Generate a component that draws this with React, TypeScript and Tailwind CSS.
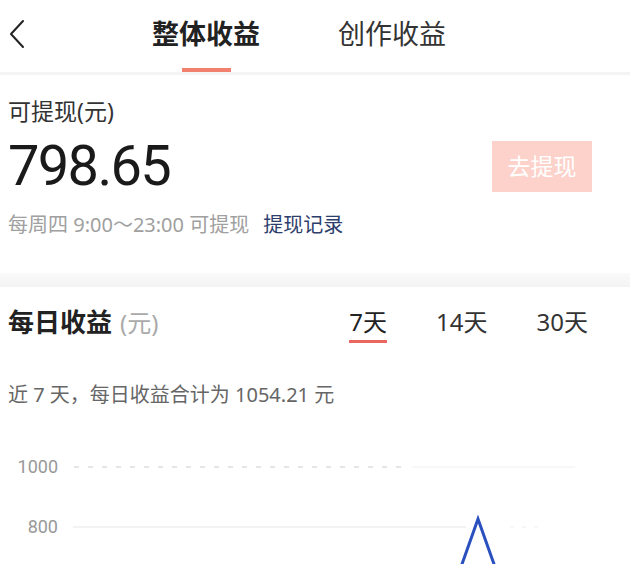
import React from "react";

const cjk = { fontFamily: '"Noto Sans", "Noto Sans CJK SC", sans-serif' };

export default function App() {
  return (
    <div className="w-[630px] h-[564px] overflow-hidden bg-white text-[#222]" style={cjk}>
      {/* Header */}
      <div className="relative h-[72px] flex items-center">
        <div className="w-[40px] pl-[8px] pb-[4px] flex items-center">
          <svg width="18" height="32" viewBox="0 0 18 32">
            <path d="M15 3 L3 16 L15 29" fill="none" stroke="#222" strokeWidth="2" strokeLinecap="round" strokeLinejoin="round" />
          </svg>
        </div>
        <div className="flex ml-[112px] gap-[78px] h-full">
          <div className="relative flex items-center h-full pb-[6px]">
            <span className="text-[27px] font-bold leading-none">整体收益</span>
            <div className="absolute bottom-0 left-[30px] w-[49px] h-[4px] bg-[#f2806e]" />
          </div>
          <div className="flex items-center h-full pb-[6px]">
            <span className="text-[27px] leading-none text-[#333]">创作收益</span>
          </div>
        </div>
      </div>
      <div className="h-[3px] bg-[#f4f4f4]" />

      {/* Balance */}
      <div className="px-[8px] pt-[21px] h-[198px]">
        <div className="text-[23px] leading-[30px] text-[#333]">可提现(元)</div>
        <div className="flex items-center justify-between mt-[8px]">
          <div className="text-[56px] leading-[64px] tracking-[-0.03em] text-[#1a1a1a]" style={{ fontFamily: "Roboto, sans-serif" }}>
            798.65
          </div>
          <div className="w-[100px] h-[51px] mr-[30px] bg-[#fcd2ca] flex items-center justify-center text-white text-[23px]">
            去提现
          </div>
        </div>
        <div className="flex items-center mt-[14px] leading-[26px] text-[20px]">
          <span className="text-[#a0a0a0]">每周四 9:00～23:00 可提现</span>
          <span className="ml-[14px] text-[#2d3e6d]">提现记录</span>
        </div>
      </div>
      <div className="h-[14px] bg-gradient-to-b from-[#fafafa] to-[#f3f3f3]" />

      {/* Daily */}
      <div className="flex items-start justify-between pl-[8px] pr-[42px] pt-[20px]">
        <div className="flex items-baseline h-[30px] leading-[30px]">
          <span className="text-[26px] font-bold">每日收益</span>
          <span className="ml-[8px] text-[24px] text-[#aaa]">(元)</span>
        </div>
        <div className="flex text-[24px] leading-[30px]">
          <div className="flex flex-col">
            <span>7天</span>
            <div className="mt-[3px] h-[3px] bg-[#e8675f]" />
          </div>
          <div className="ml-[49px] text-[#333]">14天</div>
          <div className="ml-[49px] text-[#333]">30天</div>
        </div>
      </div>
      <div className="px-[8px] mt-[39px] text-[20px] leading-[26px] text-[#666]">近 7 天，每日收益合计为 1054.21 元</div>

      {/* Chart */}
      <div className="mt-[33px]">
        <svg width="630" height="140" viewBox="0 0 630 140">
          <text x="58" y="32" textAnchor="end" fontSize="18" fill="#999" fontFamily="Roboto, sans-serif">1000</text>
          <line x1="74" y1="26" x2="410" y2="26" stroke="#ddd" strokeWidth="1.5" strokeDasharray="5 9" />
          <line x1="412" y1="26" x2="575" y2="26" stroke="#f0f0f0" strokeWidth="1" />
          <text x="58" y="92" textAnchor="end" fontSize="18" fill="#999" fontFamily="Roboto, sans-serif">800</text>
          <line x1="73" y1="86" x2="466" y2="86" stroke="#e6e6e6" strokeWidth="1" />
          <line x1="510" y1="86" x2="540" y2="86" stroke="#eee" strokeWidth="1" strokeDasharray="4 8" />
          <polyline points="456,140 478,78 500,140" fill="none" stroke="#2a4fbe" strokeWidth="3" strokeLinejoin="miter" />
        </svg>
      </div>
    </div>
  );
}
